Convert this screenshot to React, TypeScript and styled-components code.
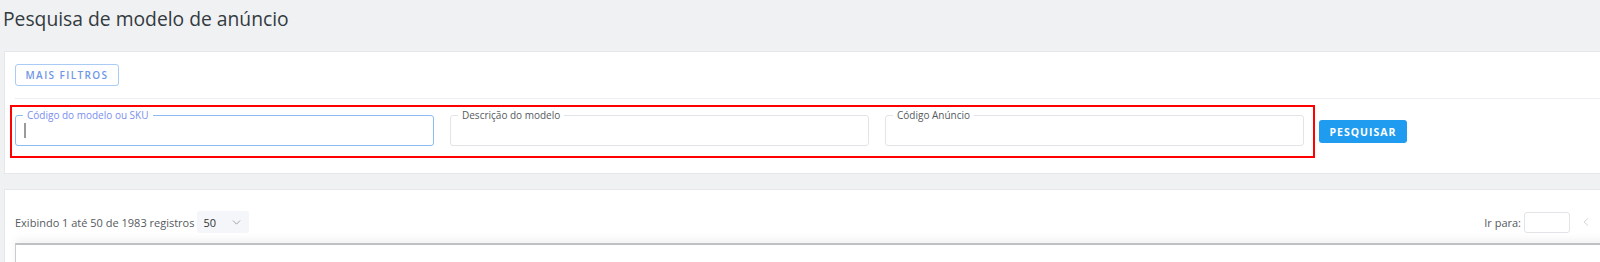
import styled, { createGlobalStyle } from "styled-components";
import { ChevronDown, ChevronLeft } from "lucide-react";

const GlobalStyle = createGlobalStyle`
  html, body {
    margin: 0;
    padding: 0;
    background: #f0f1f3;
    overflow: hidden;
  }
  * {
    box-sizing: border-box;
  }
`;

const Page = styled.div`
  width: 1610px;
  padding: 5px 0 0 3px;
  font-family: "Open Sans", "Liberation Sans", sans-serif;
`;

const Title = styled.h1`
  margin: 0 0 19px 0;
  font-size: 19.3px;
  font-weight: 400;
  line-height: 27px;
  color: #333a40;
`;

const Card = styled.div<{ $pad: string }>`
  background: #fff;
  border: 1px solid #e5e7eb;
  border-right: none;
  margin-left: 1px;
  padding: ${({ $pad }) => $pad};
`;

const OutlineButton = styled.button`
  height: 22px;
  width: 104px;
  background: #fff;
  border: 1px solid #a9cbf5;
  border-radius: 3px;
  color: #6f97e6;
  font-family: inherit;
  font-size: 10px;
  font-weight: 600;
  letter-spacing: 1.4px;
  padding: 0;
`;

const Divider = styled.div`
  height: 1px;
  background: #eceef1;
  margin: 12px 0 6px 0;
`;

const FilterRow = styled.div`
  display: flex;
  align-items: center;
  margin-left: -5px;
  gap: 4px;
`;

const Highlight = styled.div`
  display: flex;
  gap: 16px;
  border: 2px solid #ff0000;
  padding: 8px 9px 10px 3px;
`;

const Field = styled.div<{ $active?: boolean }>`
  position: relative;
  width: 419px;
  height: 31px;
  border: 1px solid ${({ $active }) => ($active ? "#8cbcf0" : "#e2e4e7")};
  border-radius: 3px;
  display: flex;
  align-items: center;
  padding-left: 8px;
`;

const FieldLabel = styled.span<{ $active?: boolean }>`
  position: absolute;
  top: -8px;
  left: 7px;
  padding: 0 4px;
  background: #fff;
  font-size: 10px;
  line-height: 14px;
  color: ${({ $active }) => ($active ? "#7b8ef0" : "#555a60")};
`;

const Caret = styled.span`
  width: 2px;
  height: 15px;
  background: #9a9a9a;
  flex-shrink: 0;
`;

const FieldInput = styled.input`
  border: none;
  outline: none;
  background: transparent;
  flex: 1;
  min-width: 0;
  height: 100%;
  font-family: inherit;
  font-size: 12px;
  padding: 0 0 0 2px;
`;

const PrimaryButton = styled.button`
  height: 23px;
  width: 88px;
  background: #1f9cf0;
  border: none;
  border-radius: 3px;
  color: #fff;
  font-family: inherit;
  font-size: 10.5px;
  font-weight: 700;
  letter-spacing: 1px;
  padding: 0;
`;

const Gap = styled.div`
  height: 15px;
`;

const Toolbar = styled.div`
  display: flex;
  align-items: center;
  justify-content: space-between;
  height: 22px;
`;

const ToolbarGroup = styled.div`
  display: flex;
  align-items: center;
`;

const Muted = styled.span`
  font-size: 11px;
  color: #555a60;
`;

const PageSizeSelect = styled.div`
  display: flex;
  align-items: center;
  justify-content: space-between;
  width: 52px;
  height: 22px;
  margin-left: 3px;
  padding: 0 6px;
  background: #f4f6f9;
  border-radius: 3px;
  font-size: 11px;
  color: #333;
`;

const GotoInput = styled.input`
  width: 46px;
  height: 21px;
  margin-left: 3px;
  border: 1px solid #e2e4e7;
  border-radius: 3px;
  background: #fff;
`;

const PrevArrow = styled.span`
  display: flex;
  margin-left: 9px;
  color: #c9ccd1;
`;

const TableBox = styled.div`
  margin: 10px -17px 0 0;
  height: 40px;
  border: 1px solid #c9cbcf;
  border-top: 2px solid #bfc1c5;
  border-right: none;
  box-shadow: 0 -4px 8px rgba(0, 0, 0, 0.05);
  background: #fff;
`;

const fields = [
  { label: "Código do modelo ou SKU", active: true },
  { label: "Descrição do modelo" },
  { label: "Código Anúncio" },
];

const App = () => {
  return (
    <>
      <GlobalStyle />
      <Page>
        <Title>Pesquisa de modelo de anúncio</Title>
        <Card $pad="10px 0 15px 10px">
          <OutlineButton>MAIS FILTROS</OutlineButton>
          <Divider />
          <FilterRow>
            <Highlight>
              {fields.map((f) => (
                <Field key={f.label} $active={f.active}>
                  <FieldLabel $active={f.active}>{f.label}</FieldLabel>
                  {f.active && <Caret />}
                  <FieldInput type="text" />
                </Field>
              ))}
            </Highlight>
            <PrimaryButton>PESQUISAR</PrimaryButton>
          </FilterRow>
        </Card>
        <Gap />
        <Card $pad="21px 17px 0 10px">
          <Toolbar>
            <ToolbarGroup>
              <Muted>Exibindo 1 até 50 de 1983 registros</Muted>
              <PageSizeSelect>
                <span>50</span>
                <ChevronDown size={13} color="#8a9099" strokeWidth={1.5} />
              </PageSizeSelect>
            </ToolbarGroup>
            <ToolbarGroup>
              <Muted>Ir para:</Muted>
              <GotoInput type="text" />
              <PrevArrow>
                <ChevronLeft size={14} strokeWidth={1.5} />
              </PrevArrow>
            </ToolbarGroup>
          </Toolbar>
          <TableBox />
        </Card>
      </Page>
    </>
  );
};

export default App;
